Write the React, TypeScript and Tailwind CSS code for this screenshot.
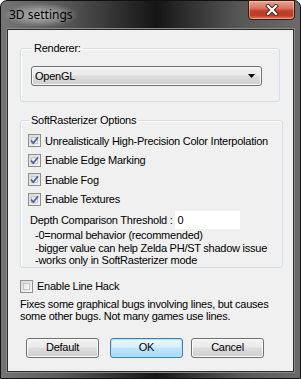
import React from "react";

const font = { fontFamily: '"Liberation Sans", Arial, sans-serif' };

function Check({ checked }: { checked?: boolean }) {
  return (
    <span className="relative flex h-[13px] w-[13px] shrink-0 items-center justify-center border border-[#8e8f8f] bg-[linear-gradient(135deg,#d8d8d8,#f6f6f6)]">
      <span className="absolute inset-[2px] border border-[#c6c6c6] bg-[linear-gradient(135deg,#e4e4e4,#fbfbfb)]" />
      {checked && (
        <svg viewBox="0 0 11 11" className="relative h-[11px] w-[11px]">
          <path d="M2 5.5 L4.3 8.2 L9 2.2" fill="none" stroke="#4b61a8" strokeWidth="1.8" />
        </svg>
      )}
    </span>
  );
}

function CheckRow({ label, checked }: { label: string; checked?: boolean }) {
  return (
    <div className="flex h-[19.5px] items-center gap-[4px]">
      <Check checked={checked} />
      <span>{label}</span>
    </div>
  );
}

function Button({ children, primary, className }: { children: React.ReactNode; primary?: boolean; className?: string }) {
  return (
    <button
      type="button"
      className={
        (primary
          ? "h-[20px] w-[73px] rounded-[3px] border border-[#3c7fb1] bg-[linear-gradient(#eaf6fd_0%,#d9f0fc_45%,#bee6fd_50%,#a7d9f5_100%)] shadow-[inset_0_0_0_1px_#b4e3f9] text-black"
          : "h-[20px] w-[73px] rounded-[3px] border border-[#707070] bg-[linear-gradient(#f2f2f2_0%,#ebebeb_45%,#dddddd_50%,#cfcfcf_100%)] shadow-[inset_0_0_0_1px_#fcfcfc] text-black") +
        " " +
        (className ?? "")
      }
    >
      {children}
    </button>
  );
}

export default function App() {
  return (
    <div
      className="flex h-[379px] w-[301px] flex-col rounded-t-[7px] border border-[#111] bg-[linear-gradient(to_right,#747474_0%,#5a5a5a_20%,#2a2a2a_42%,#151515_52%,#2e2e2e_62%,#575757_80%,#6a6a6a_100%)] text-[11px] tracking-[-0.25px] text-black"
      style={font}
    >
      {/* Title bar */}
      <div className="relative flex h-[28px] shrink-0 items-start">
        <div className="ml-[2px] mt-[2px] rounded-[10px] bg-[radial-gradient(closest-side,rgba(255,255,255,0.55),rgba(255,255,255,0.25)_60%,transparent)] px-[6px] py-[3px]">
          <span className="text-[12px] tracking-normal text-black" style={{ fontFamily: '"Noto Sans", "Open Sans", sans-serif' }}>
            3D settings
          </span>
        </div>
        <div className="absolute right-[5px] top-[-1px] flex h-[20px] w-[47px] items-center justify-center rounded-b-[4px] border border-[#3b1a14] bg-[linear-gradient(#e8a493_0%,#d67560_40%,#c2402a_55%,#c33a20_80%,#de7e5e_100%)] shadow-[inset_0_0_0_1px_rgba(255,220,210,0.45)]">
          <svg viewBox="0 0 14 12" className="h-[12px] w-[14px]">
            <path d="M3 2 L11 10 M11 2 L3 10" stroke="#3a2420" strokeWidth="4" strokeLinecap="square" />
            <path d="M3 2 L11 10 M11 2 L3 10" stroke="#ffffff" strokeWidth="2.2" strokeLinecap="square" />
          </svg>
        </div>
      </div>

      {/* Client area */}
      <div className="mx-[6px] mb-[6px] flex flex-1 flex-col border border-[#2b2b2b] bg-[#f0f0f0] shadow-[0_0_0_1px_#8a8a8a]">
        {/* Renderer group */}
        <fieldset className="ml-[12px] mt-[12px] h-[60px] w-[260px] rounded-[3px] border border-[#d5dfe5] shadow-[inset_1px_1px_0_#fff] px-[10px]">
          <legend className="ml-[1px] px-[2px] leading-[13px]">Renderer:</legend>
          <div className="mt-[11px] flex h-[20px] w-[231px] items-center justify-between rounded-[3px] border border-[#707070] bg-[linear-gradient(#f2f2f2_0%,#ebebeb_45%,#dddddd_50%,#cfcfcf_100%)] pl-[3px] pr-[6px] shadow-[inset_0_0_0_1px_#fcfcfc]">
            <span>OpenGL</span>
            <svg viewBox="0 0 7 4" className="h-[4px] w-[7px]">
              <path d="M0 0 H7 L3.5 4 Z" fill="#000" />
            </svg>
          </div>
        </fieldset>

        {/* SoftRasterizer group */}
        <fieldset className="ml-[12px] mt-[12px] h-[154px] w-[263px] rounded-[3px] border border-[#d5dfe5] shadow-[inset_1px_1px_0_#fff] pl-[7px]">
          <legend className="ml-[1px] px-[2px] leading-[13px]">SoftRasterizer Options</legend>
          <div className="mt-[4px] flex flex-col">
            <CheckRow checked label="Unrealistically High-Precision Color Interpolation" />
            <CheckRow checked label="Enable Edge Marking" />
            <CheckRow checked label="Enable Fog" />
            <CheckRow checked label="Enable Textures" />
          </div>
          <div className="mt-[2px] flex h-[18px] items-center pl-[2px]">
            <span>Depth Comparison Threshold :</span>
            <div className="ml-[2px] flex h-[18px] w-[65px] items-center bg-white pl-[3px]">0</div>
          </div>
          <div className="flex flex-col pl-[7px] leading-[12.5px]">
            <span>-0=normal behavior (recommended)</span>
            <span>-bigger value can help Zelda PH/ST shadow issue</span>
            <span>-works only in SoftRasterizer mode</span>
          </div>
        </fieldset>

        {/* Line hack */}
        <div className="ml-[12px] mt-[10px] flex items-center gap-[4px]">
          <Check />
          <span>Enable Line Hack</span>
        </div>
        <div className="ml-[12px] mt-[3px] flex flex-col leading-[12.5px]">
          <span>Fixes some graphical bugs involving lines, but causes</span>
          <span>some other bugs. Not many games use lines.</span>
        </div>

        {/* Buttons */}
        <div className="mt-[15px] flex">
          <Button className="ml-[18px]">Default</Button>
          <Button primary className="ml-[11px]">OK</Button>
          <Button className="ml-[8px]">Cancel</Button>
        </div>
      </div>
    </div>
  );
}
